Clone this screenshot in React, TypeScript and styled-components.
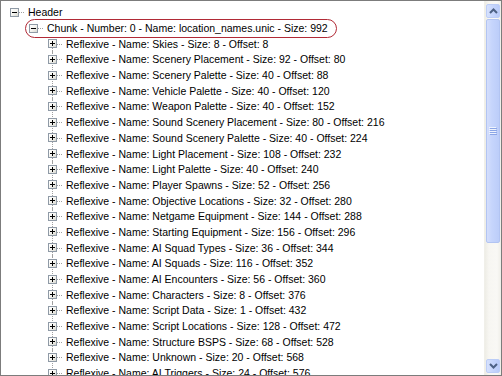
import React from "react";
import styled, { createGlobalStyle } from "styled-components";

const Global = createGlobalStyle`
  html, body { margin: 0; padding: 0; background: #ffffff; }
  body { font-family: "Liberation Sans", Arial, sans-serif; }
`;

const Window = styled.div`
  width: 502px;
  height: 376px;
  box-sizing: border-box;
  border: 1px solid #7c7c7c;
  background: #ffffff;
  display: flex;
  overflow: hidden;
`;

const TreeArea = styled.div`
  flex: 1;
  overflow: hidden;
  padding-top: 3.5px;
  display: flex;
  flex-direction: column;
`;

const Row = styled.div<{ $level: number }>`
  flex: none;
  height: 15.7px;
  display: flex;
  align-items: center;
  padding-left: ${(p) => 4 + p.$level * 19}px;
  font-size: 10.5px;
  color: #000;
  white-space: nowrap;
`;

const Connector = styled.span<{ $down: boolean; $up: boolean }>`
  position: relative;
  flex: none;
  width: 19px;
  height: 16px;
  display: flex;
  align-items: center;
  &::before {
    content: "";
    display: ${(p) => (p.$down || p.$up ? "block" : "none")};
    position: absolute;
    left: 9px;
    width: 1px;
    top: ${(p) => (p.$up ? "0" : "8px")};
    bottom: ${(p) => (p.$down ? "-1px" : "8px")};
    background-image: linear-gradient(to bottom, #a0a0a0 50%, transparent 50%);
    background-size: 1px 2px;
  }
  &::after {
    content: "";
    position: absolute;
    left: 14px;
    width: 6px;
    top: 8px;
    height: 1px;
    background-image: linear-gradient(to right, #a0a0a0 50%, transparent 50%);
    background-size: 2px 1px;
  }
`;

const ExpandBox = styled.span<{ $open: boolean }>`
  position: relative;
  z-index: 1;
  margin-left: 5px;
  width: 9px;
  height: 9px;
  box-sizing: border-box;
  border: 1px solid #8f9aa6;
  background: linear-gradient(135deg, #ffffff 0%, #f4f4f0 50%, #d8d8d0 100%);
  &::before {
    content: "";
    position: absolute;
    left: 1px;
    top: 3px;
    width: 5px;
    height: 1px;
    background: #000;
  }
  &::after {
    content: "";
    display: ${(p) => (p.$open ? "none" : "block")};
    position: absolute;
    left: 3px;
    top: 1px;
    width: 1px;
    height: 5px;
    background: #000;
  }
`;

const Label = styled.span`
  padding-left: 4px;
  line-height: 16px;
`;

const Highlight = styled.span`
  position: relative;
  display: flex;
  align-items: center;
  &::before {
    content: "";
    position: absolute;
    left: 1px;
    right: -9px;
    top: -1px;
    bottom: -2px;
    border: 1.5px solid #b12a36;
    border-radius: 10px;
    pointer-events: none;
  }
`;

const Scrollbar = styled.div`
  flex: none;
  width: 17px;
  box-sizing: border-box;
  padding: 3px 1px 2px 1px;
  display: flex;
  flex-direction: column;
  background: linear-gradient(to right, #eeede6 0%, #f7f6f2 25%, #f9f8f5 75%, #efeee8 100%);
  border-left: 1px solid #f0efe9;
`;

const ArrowButton = styled.div`
  flex: none;
  height: 14px;
  box-sizing: border-box;
  border: 1px solid #bccdf7;
  border-radius: 2px;
  background: linear-gradient(to right, #d6e1fd 0%, #c6d5fc 50%, #b9cbf9 100%);
  display: flex;
  align-items: center;
  justify-content: center;
`;

const Track = styled.div`
  flex: 1;
  display: flex;
  flex-direction: column;
  padding: 1px 0;
`;

const Thumb = styled.div`
  flex: none;
  height: 224px;
  box-sizing: border-box;
  border: 1px solid #b2c4f2;
  border-radius: 2px;
  background: linear-gradient(to right, #d4defc 0%, #c6d5fc 40%, #bccdf9 100%);
  display: flex;
  align-items: center;
  justify-content: center;
`;

const Chevron = ({ up }: { up: boolean }) => (
  <svg width="9" height="6" viewBox="0 0 9 6">
    <path
      d={up ? "M1 5 L4.5 1.5 L8 5" : "M1 1 L4.5 4.5 L8 1"}
      fill="none"
      stroke="#4d6185"
      strokeWidth="2"
    />
  </svg>
);

const Grip = () => (
  <svg width="8" height="8" viewBox="0 0 8 8">
    {[0, 2, 4, 6].map((y) => (
      <g key={y}>
        <rect x="0" y={y} width="7" height="1" fill="#eef3fe" />
        <rect x="1" y={y + 1} width="7" height="1" fill="#8ca6e6" />
      </g>
    ))}
  </svg>
);

const reflexives: [string, number, number][] = [
  ["Skies", 8, 8],
  ["Scenery Placement", 92, 80],
  ["Scenery Palette", 40, 88],
  ["Vehicle Palette", 40, 120],
  ["Weapon Palette", 40, 152],
  ["Sound Scenery Placement", 80, 216],
  ["Sound Scenery Palette", 40, 224],
  ["Light Placement", 108, 232],
  ["Light Palette", 40, 240],
  ["Player Spawns", 52, 256],
  ["Objective Locations", 32, 280],
  ["Netgame Equipment", 144, 288],
  ["Starting Equipment", 156, 296],
  ["AI Squad Types", 36, 344],
  ["AI Squads", 116, 352],
  ["AI Encounters", 56, 360],
  ["Characters", 8, 376],
  ["Script Data", 1, 432],
  ["Script Locations", 128, 472],
  ["Structure BSPS", 68, 528],
  ["Unknown", 20, 568],
  ["AI Triggers", 24, 576],
];

export default function App() {
  return (
    <>
      <Global />
      <Window>
        <TreeArea>
          <Row $level={0}>
            <Connector $down={false} $up={false}>
              <ExpandBox $open />
            </Connector>
            <Label>Header</Label>
          </Row>
          <Row $level={1}>
            <Highlight>
              <Connector $down={false} $up={false}>
                <ExpandBox $open />
              </Connector>
              <Label>Chunk - Number: 0 - Name: location_names.unic - Size: 992</Label>
            </Highlight>
          </Row>
          {reflexives.map(([name, size, offset], i) => (
            <Row $level={2} key={name}>
              <Connector $down $up={i > 0}>
                <ExpandBox $open={false} />
              </Connector>
              <Label>
                Reflexive - Name: {name} - Size: {size} - Offset: {offset}
              </Label>
            </Row>
          ))}
        </TreeArea>
        <Scrollbar>
          <ArrowButton>
            <Chevron up />
          </ArrowButton>
          <Track>
            <Thumb>
              <Grip />
            </Thumb>
          </Track>
          <ArrowButton>
            <Chevron up={false} />
          </ArrowButton>
        </Scrollbar>
      </Window>
    </>
  );
}
